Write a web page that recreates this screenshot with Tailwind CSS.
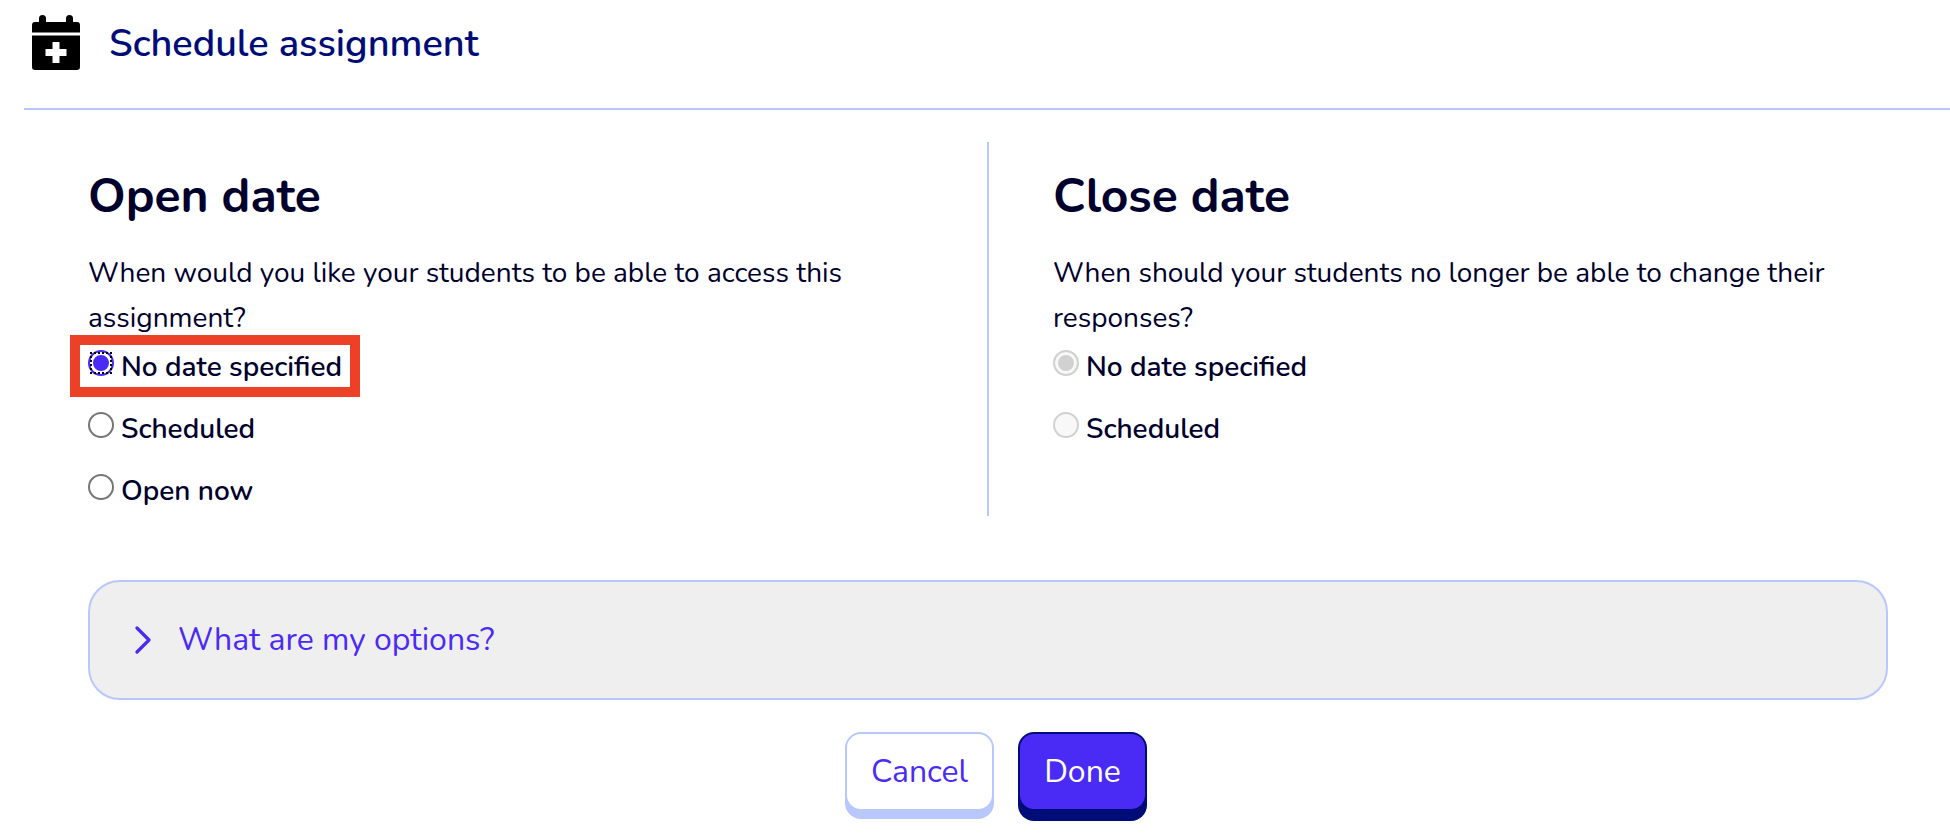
<!DOCTYPE html>
<html lang="en">
<head>
<meta charset="utf-8">
<meta name="viewport" content="width=device-width, initial-scale=1">
<title>Schedule assignment</title>
<script src="https://cdn.jsdelivr.net/npm/@tailwindcss/browser@4"></script>
</head>
<body class="bg-white pl-6 font-[Nunito,Lato,sans-serif] text-[#00002d]">
  <header class="flex h-[110px] items-start gap-[29px] border-b-2 border-[#b9c8fc] pt-[15px] pl-2">
    <svg class="h-[55px] w-12 shrink-0" viewBox="0 0 48 55" fill="#000" aria-hidden="true">
      <path d="M7 8V3.500a3.500 3.500 0 0 1 7 0V7h20V3.500a3.500 3.500 0 0 1 7 0V7h4a3 3 0 0 1 3 3v7.500H0V10a3 3 0 0 1 3-3h4z"/>
      <path fill-rule="evenodd" d="M0 20.500h48V52a3 3 0 0 1-3 3H3a3 3 0 0 1-3-3zM20.500 27v7H13.500v7h7v7h7v-7h7v-7h-7v-7z"/>
    </svg>
    <h1 class="text-[38px] leading-[58px] font-semibold text-[#000c77]">Schedule assignment</h1>
  </header>

  <main>
    <div class="grid grid-cols-2 pt-8">
      <section class="h-[374px] px-16 pt-6">
        <h2 class="text-5xl leading-[60px] font-bold">Open date</h2>
        <p id="open-label" class="mt-[25px] text-[28px] leading-[45px]">When would you like your students to be able to access this assignment?</p>
        <div role="radiogroup" aria-labelledby="open-label" class="mt-1 flex flex-col gap-[17px] text-[28px] leading-[45px] font-semibold">
          <div class="relative flex items-center gap-[7px]">
            <span class="mb-[10px] grid outline-2 -outline-offset-4 outline-black outline-dotted">
              <input id="open-none" type="radio" name="open" checked class="size-[26px] appearance-none rounded-full border-2 border-[#4a2af5] bg-white checked:bg-[#4a2af5] checked:shadow-[inset_0_0_0_3px_white]">
            </span>
            <label for="open-none">No date specified</label>
            <span class="pointer-events-none absolute -top-[10px] -left-[18px] h-[62px] w-[290px] border-10 border-[#ec4027]"></span>
          </div>
          <div class="flex items-center gap-[7px]">
            <input id="open-scheduled" type="radio" name="open" class="mb-[10px] size-[26px] appearance-none rounded-full border-2 border-[#767676] bg-white checked:border-[#4a2af5] checked:bg-[#4a2af5] checked:shadow-[inset_0_0_0_3px_white]">
            <label for="open-scheduled">Scheduled</label>
          </div>
          <div class="flex items-center gap-[7px]">
            <input id="open-now" type="radio" name="open" class="mb-[10px] size-[26px] appearance-none rounded-full border-2 border-[#767676] bg-white checked:border-[#4a2af5] checked:bg-[#4a2af5] checked:shadow-[inset_0_0_0_3px_white]">
            <label for="open-now">Open now</label>
          </div>
        </div>
      </section>

      <section class="h-[374px] border-l-2 border-[#b9c8fc] px-16 pt-6">
        <h2 class="text-5xl leading-[60px] font-bold">Close date</h2>
        <p id="close-label" class="mt-[25px] text-[28px] leading-[45px]">When should your students no longer be able to change their responses?</p>
        <div role="radiogroup" aria-labelledby="close-label" class="mt-1 flex flex-col gap-[17px] text-[28px] leading-[45px] font-semibold">
          <div class="flex items-center gap-[7px]">
            <input id="close-none" type="radio" name="close" checked disabled class="mb-[10px] size-[26px] appearance-none rounded-full border-2 border-[#d1d1d1] bg-[#d1d1d1] shadow-[inset_0_0_0_3px_#f8f8f8]">
            <label for="close-none">No date specified</label>
          </div>
          <div class="flex items-center gap-[7px]">
            <input id="close-scheduled" type="radio" name="close" disabled class="mb-[10px] size-[26px] appearance-none rounded-full border-2 border-[#d1d1d1] bg-[#f8f8f8]">
            <label for="close-scheduled">Scheduled</label>
          </div>
        </div>
      </section>
    </div>

    <div class="mt-16 pr-[62px] pl-16">
      <button type="button" aria-expanded="false" class="flex h-[120px] w-full items-center gap-[27px] rounded-[32px] border-2 border-[#b9c8fc] bg-[#efefef] pl-[45px] text-[32px] text-[#4a2af5]">
        <svg class="h-7 w-4" viewBox="0 0 16 28" fill="none" stroke="currentColor" stroke-width="3.200" stroke-linecap="round" stroke-linejoin="round" aria-hidden="true"><path d="M2 2l12 12L2 26"/></svg>
        <span>What are my options?</span>
      </button>
    </div>

    <div class="flex items-start justify-center gap-6 pt-8 pb-[10px] pl-[18px]">
      <button type="button" class="h-[79px] w-[149px] rounded-2xl border-2 border-[#b9c8fc] bg-white text-[32px] text-[#4a2af5] shadow-[0_8px_0_0_#b9c8fc]">Cancel</button>
      <button type="button" class="h-[79px] w-[129px] rounded-2xl border-2 border-[#000c77] bg-[#4a2af5] text-[32px] text-white shadow-[0_10px_0_0_#000c77]">Done</button>
    </div>
  </main>
</body>
</html>
